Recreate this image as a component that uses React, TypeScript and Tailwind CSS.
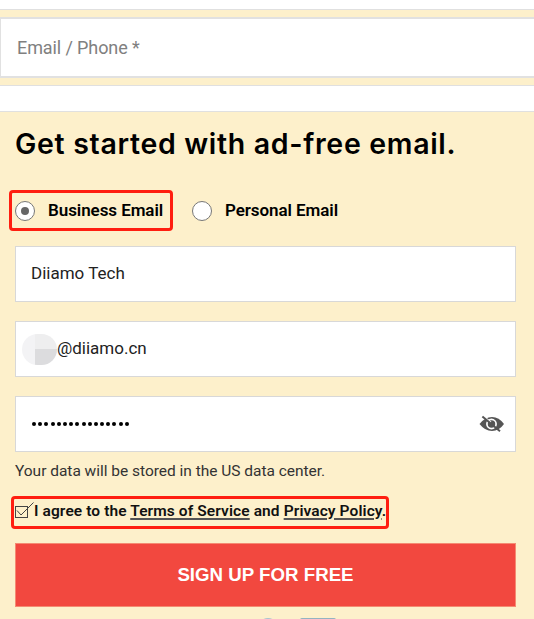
import React from "react";

function Radio({ checked = false }: { checked?: boolean }) {
  return (
    <span className="flex h-5 w-5 shrink-0 items-center justify-center rounded-full border border-[#777] bg-white">
      {checked && <span className="h-2 w-2 rounded-full bg-[#666]" />}
    </span>
  );
}

function EyeOff() {
  return (
    <svg width="26" height="18" viewBox="0 0 26 18" className="block">
      <path d="M0.5 9 Q6 2 13 2 Q20 2 25 9 Q20 16 13 16 Q6 16 0.5 9Z" fill="#555" />
      <circle cx="12.5" cy="9" r="4.6" fill="#555" stroke="#fff" strokeWidth="1.7" />
      <path d="M4.6 1 L12 7.2" stroke="#fff" strokeWidth="1.2" />
      <path d="M3.4 1.6 L21 16.2" stroke="#555" strokeWidth="2" />
    </svg>
  );
}

function Field({ children }: { children: React.ReactNode }) {
  return (
    <div className="flex h-14 w-[501px] items-center border border-[#d8d8d8] bg-white">{children}</div>
  );
}

export default function App() {
  return (
    <div className="flex h-[619px] w-[534px] flex-col overflow-hidden whitespace-nowrap bg-[#fdf0cb] font-['Roboto','Liberation_Sans',sans-serif] text-black">
      <div className="h-[10px] shrink-0 border-b border-[#e0e0e0] bg-white" />
      <div className="mt-[7px] flex h-[61px] shrink-0 items-center border-y-2 border-l border-[#e1e1e1] bg-white pl-4 text-[18px] text-[#808080]">
        <span className="tracking-[-0.1px]">Email / Phone *</span>
      </div>
      <div className="mt-[7px] h-[27px] shrink-0 border-y border-[#e0e0e0] bg-white" />

      <div className="ml-[15px] flex flex-col items-start">
        <h1 className="mt-[12px] h-10 font-['Inter',sans-serif] text-[28.5px] font-semibold leading-10">
          <span className="tracking-[0.68px]">Get started with ad-free email.</span>
        </h1>
        <div className="-ml-[6px] mt-[26px] flex h-[41px] items-center">
          <div className="flex h-[41px] w-[164px] items-center rounded-[4px] border-[3px] border-[#ff1e10] pl-[3px] text-[17px] font-semibold">
            <Radio checked />
            <span className="ml-[13px] tracking-[-0.07px]">Business Email</span>
          </div>
          <div className="ml-[19px] flex items-center text-[17px] font-semibold">
            <Radio />
            <span className="ml-[13px] tracking-[-0.07px]">Personal Email</span>
          </div>
        </div>

        <div className="mt-[15px] flex flex-col gap-[19px]">
          <Field>
            <span className="ml-[15px] text-[17px] text-[#222]">Diiamo Tech</span>
          </Field>
          <Field>
            <span className="ml-[6px] grid h-[31px] w-[35px] grid-cols-[13px_22px] grid-rows-2 overflow-hidden rounded-full">
              <span className="bg-[#f3f3f5]" />
              <span className="bg-[#eeeeef]" />
              <span className="bg-[#f3f3f5]" />
              <span className="bg-[#dcdcde]" />
            </span>
            <span className="text-[17px] text-[#222]">@diiamo.cn</span>
          </Field>
          <Field>
            <span className="ml-4 flex flex-1 gap-[2.2px]">
              {Array.from({ length: 16 }, (_, i) => (
                <span key={i} className="h-1 w-1 rounded-full bg-black" />
              ))}
            </span>
            <span className="mr-[10px]">
              <EyeOff />
            </span>
          </Field>
        </div>

        <p className="mt-[9px] h-5 text-[15.5px] leading-5 text-[#333]">
          <span className="tracking-[-0.02px]">Your data will be stored in the US data center.</span>
        </p>

        <div className="-ml-[4px] mt-[15px] flex h-[33px] w-[378px] items-center rounded-[4px] border-[3px] border-[#ff1e10] pl-px">
          <svg width="19" height="18" viewBox="0 0 19 18" fill="none" stroke="#444" className="-mt-[5px] shrink-0">
            <rect x="0.5" y="5.5" width="12" height="11" />
            <path d="M2 9.5 L6 14 L18.5 1.5" />
          </svg>
          <span className="-mt-[2px] text-[15.5px] font-semibold tracking-[0.1px] text-[#111]">
            I agree to the <a className="underline decoration-[#555] decoration-2 underline-offset-2">Terms of Service</a> and{" "}
            <a className="underline decoration-[#555] decoration-2 underline-offset-2">Privacy Policy</a>.
          </span>
        </div>

        <button className="mt-[14px] flex h-[64px] w-[501px] items-center justify-center border border-[#f58a72] bg-[#f2483f] pt-px font-['Liberation_Sans',sans-serif] text-[18.7px] font-bold text-white">
          SIGN UP FOR FREE
        </button>
        <div className="ml-[243px] mt-[11px] flex gap-[22px]">
          <span className="h-5 w-5 rounded-full bg-[#a9c2d1]" />
          <span className="h-6 w-9 rounded-[2px] bg-[#94b3c2]" />
        </div>
      </div>
    </div>
  );
}
